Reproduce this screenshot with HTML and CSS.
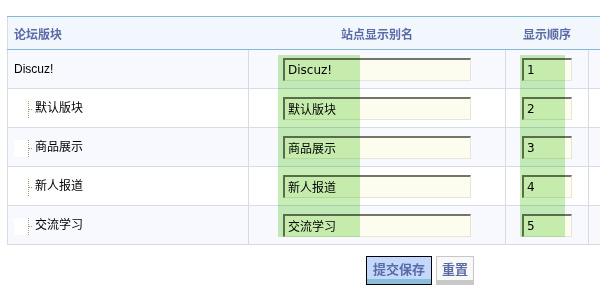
FILE: index.html
```html
<!DOCTYPE html>
<html lang="zh">
<head>
<meta charset="utf-8">
<title>论坛版块</title>
<link rel="stylesheet" href="styles.css">
</head>
<body>
<div class="page">
  <div class="board">
    <table class="forum-table">
      <colgroup>
        <col class="c-name">
        <col class="c-alias">
        <col class="c-order">
        <col class="c-rest">
      </colgroup>
      <thead>
        <tr>
          <th class="h-left">论坛版块</th>
          <th>站点显示别名</th>
          <th>显示顺序</th>
          <th></th>
        </tr>
      </thead>
      <tbody>
        <tr class="alt">
          <td class="name">Discuz!</td>
          <td class="mid"><input class="txt" type="text" value="Discuz!"></td>
          <td class="mid"><input class="num" type="text" value="1"></td>
          <td></td>
        </tr>
        <tr>
          <td class="name"><span class="node"><svg width="20" height="17" viewBox="0 0 20 17"><rect x="0" y="0" width="16" height="17" fill="#fff"/><line x1="14.5" y1="0" x2="14.5" y2="17" stroke="#9a9a80" stroke-dasharray="1 1"/><line x1="15" y1="8.5" x2="19" y2="8.5" stroke="#9a9a80" stroke-dasharray="1 1"/></svg></span>默认版块</td>
          <td class="mid"><input class="txt" type="text" value="默认版块"></td>
          <td class="mid"><input class="num" type="text" value="2"></td>
          <td></td>
        </tr>
        <tr class="alt">
          <td class="name"><span class="node"><svg width="20" height="17" viewBox="0 0 20 17"><rect x="0" y="0" width="16" height="17" fill="#fff"/><line x1="14.5" y1="0" x2="14.5" y2="17" stroke="#9a9a80" stroke-dasharray="1 1"/><line x1="15" y1="8.5" x2="19" y2="8.5" stroke="#9a9a80" stroke-dasharray="1 1"/></svg></span>商品展示</td>
          <td class="mid"><input class="txt" type="text" value="商品展示"></td>
          <td class="mid"><input class="num" type="text" value="3"></td>
          <td></td>
        </tr>
        <tr>
          <td class="name"><span class="node"><svg width="20" height="17" viewBox="0 0 20 17"><rect x="0" y="0" width="16" height="17" fill="#fff"/><line x1="14.5" y1="0" x2="14.5" y2="17" stroke="#9a9a80" stroke-dasharray="1 1"/><line x1="15" y1="8.5" x2="19" y2="8.5" stroke="#9a9a80" stroke-dasharray="1 1"/></svg></span>新人报道</td>
          <td class="mid"><input class="txt" type="text" value="新人报道"></td>
          <td class="mid"><input class="num" type="text" value="4"></td>
          <td></td>
        </tr>
        <tr class="alt">
          <td class="name"><span class="node"><svg width="20" height="17" viewBox="0 0 20 17"><rect x="0" y="0" width="16" height="17" fill="#fff"/><line x1="14.5" y1="0" x2="14.5" y2="17" stroke="#9a9a80" stroke-dasharray="1 1"/><line x1="15" y1="8.5" x2="19" y2="8.5" stroke="#9a9a80" stroke-dasharray="1 1"/></svg></span>交流学习</td>
          <td class="mid"><input class="txt" type="text" value="交流学习"></td>
          <td class="mid"><input class="num" type="text" value="5"></td>
          <td></td>
        </tr>
      </tbody>
    </table>
    <div class="hl hl-alias"></div>
    <div class="hl hl-order"></div>
  </div>
  <div class="actions">
    <button class="btn btn-submit" type="button">提交保存</button>
    <button class="btn btn-reset" type="button">重置</button>
  </div>
</div>
</body>
</html>
```

FILE: styles.css
```css
html, body {
  margin: 0;
  padding: 0;
  overflow: hidden;
  background: #ffffff;
}

body {
  font-family: "Liberation Sans", "Noto Sans CJK SC", sans-serif;
  font-size: 12px;
  color: #000;
}

.page {
  padding: 16px 0 0 7px;
}

.board {
  position: relative;
}

.forum-table {
  border-collapse: collapse;
  table-layout: fixed;
  width: 593px;
  border-left: 1px solid #d6dbe6;
}

.c-name { width: 241px; }
.c-alias { width: 257px; }
.c-order { width: 83px; }
.c-rest { width: 12px; }

thead tr {
  background: #f2f7fe;
}

th {
  height: 32px;
  padding: 0;
  border-top: 1px solid #86b9d6;
  border-bottom: 1px solid #86b9d6;
  font-family: "Noto Sans CJK SC", sans-serif;
  font-weight: bold;
  font-size: 12px;
  color: #5b6ba5;
  text-align: center;
}

th.h-left {
  text-align: left;
  padding-left: 6px;
}

td {
  height: 38px;
  padding: 0;
  border-bottom: 1px solid #d6dbe6;
  border-right: 1px solid #d6dbe6;
  vertical-align: middle;
}

tbody tr {
  background: #ffffff;
}

tbody tr.alt {
  background: #f7f9fe;
}

td.name {
  padding-left: 6px;
  font-family: "Liberation Sans", "Noto Sans CJK SC", sans-serif;
  white-space: nowrap;
}

.node {
  display: inline-block;
  width: 20px;
  height: 17px;
  vertical-align: middle;
  margin-right: 1px;
}

.node svg {
  display: block;
}

td.mid {
  text-align: center;
}

.txt, .num {
  box-sizing: border-box;
  height: 23px;
  margin: 0;
  padding: 0 3px;
  background: #fcfdef;
  border-top: 2px solid #747468;
  border-left: 2px solid #747468;
  border-right: 1px solid #e6e6d6;
  border-bottom: 1px solid #e6e6d6;
  font-family: "DejaVu Sans", "Noto Sans CJK SC", sans-serif;
  font-size: 12px;
  color: #000;
  vertical-align: middle;
  outline: none;
}

.txt { width: 188px; }
.num { width: 50px; }

.hl {
  position: absolute;
  top: 39px;
  height: 182px;
  background: #c8eeb8;
  mix-blend-mode: multiply;
  pointer-events: none;
}

.hl-alias {
  left: 271px;
  width: 82px;
}

.hl-order {
  left: 513px;
  width: 45px;
}

.actions {
  display: flex;
  gap: 4px;
  padding: 11px 0 0 359px;
}

.btn {
  box-sizing: border-box;
  height: 29px;
  margin: 0;
  font-family: "Noto Sans CJK SC", sans-serif;
  font-weight: bold;
  font-size: 13px;
  color: #5b6ba5;
  cursor: pointer;
}

.btn-submit {
  width: 66px;
  padding: 0 0 4px;
  border: 1px solid #000;
  background: linear-gradient(to bottom, #c4d8fc 0, #c4d8fc 22px, #8bbcd8 22px, #8bbcd8 100%);
}

.btn-reset {
  width: 38px;
  padding: 0;
  border: 1px solid #c8c8c8;
  border-bottom: 5px solid #c8c8c8;
  background: #f8f8f8;
}
```
